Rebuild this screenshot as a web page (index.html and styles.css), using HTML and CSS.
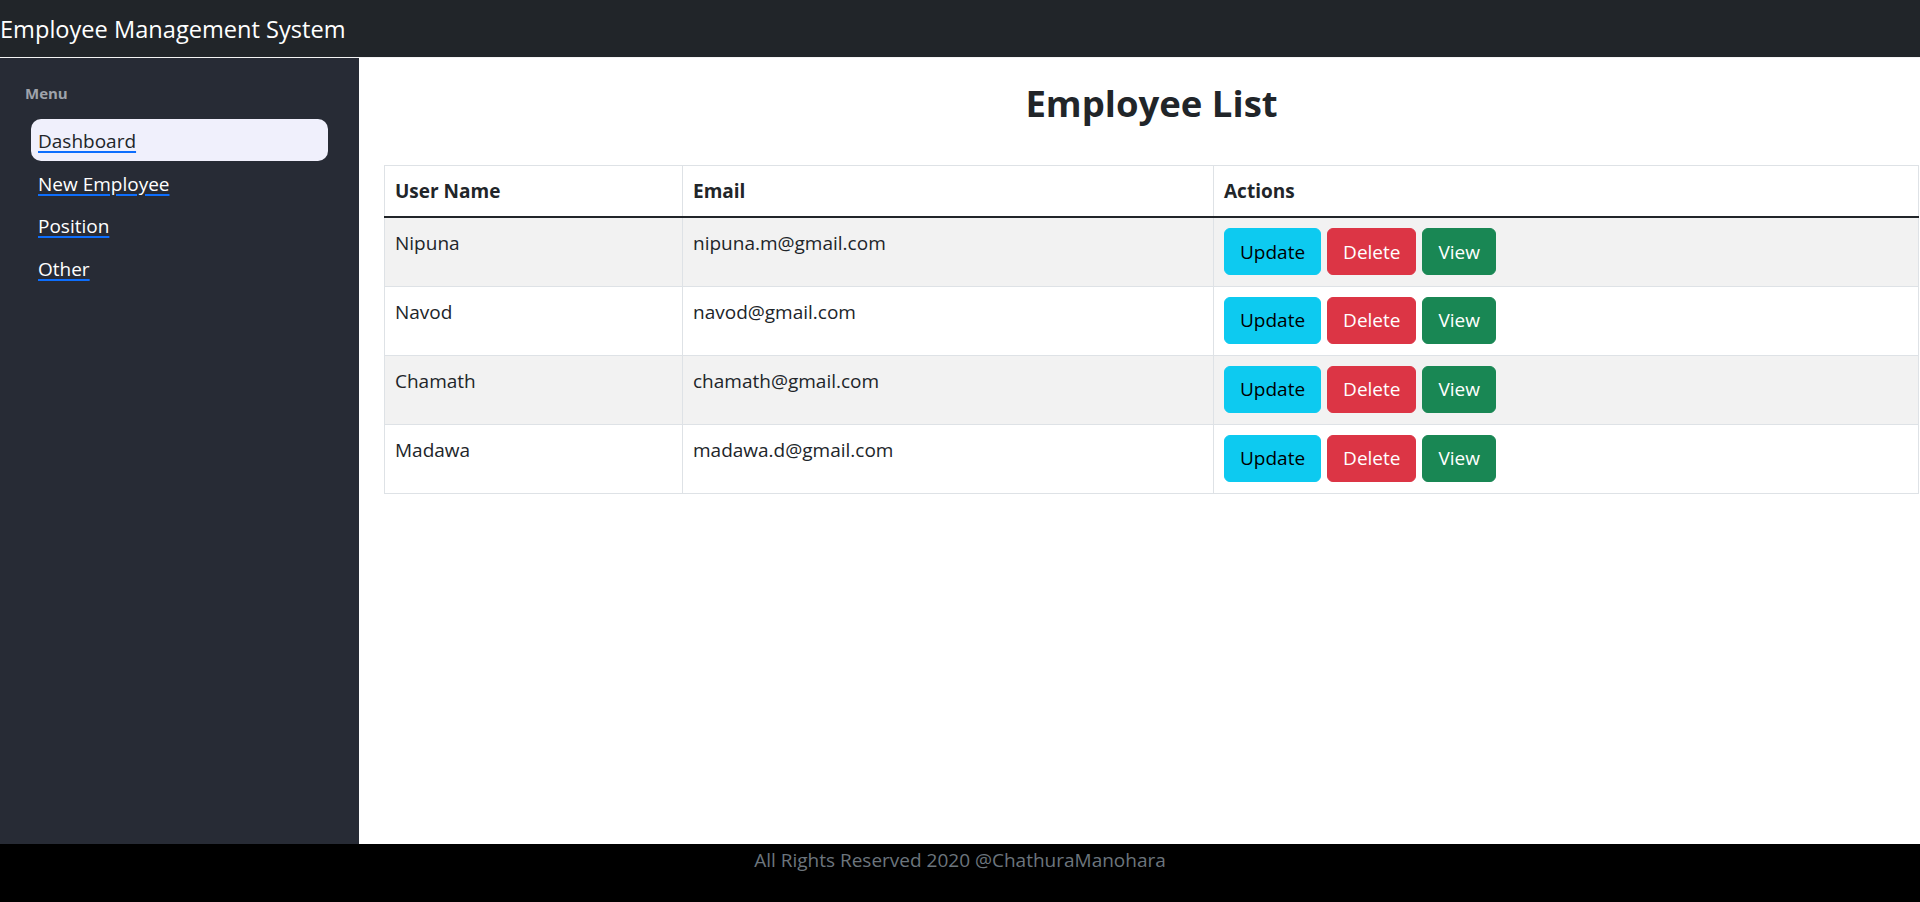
FILE: index.html
```html
<!DOCTYPE html>
<html lang="en">
<head>
<meta charset="utf-8">
<title>Employee Management System</title>
<link rel="stylesheet" href="styles.css">
</head>
<body>
<div class="app">
  <header class="topbar">
    <span class="brand">Employee Management System</span>
  </header>
  <div class="middle">
    <nav class="sidebar">
      <div class="menu-label">Menu</div>
      <ul class="menu">
        <li class="menu-item active"><a href="#">Dashboard</a></li>
        <li class="menu-item"><a href="#">New Employee</a></li>
        <li class="menu-item"><a href="#">Position</a></li>
        <li class="menu-item"><a href="#">Other</a></li>
      </ul>
    </nav>
    <main class="content">
      <h2 class="title">Employee List</h2>
      <table class="emp-table">
        <thead>
          <tr>
            <th class="col-name">User Name</th>
            <th class="col-email">Email</th>
            <th class="col-actions">Actions</th>
          </tr>
        </thead>
        <tbody>
          <tr class="striped">
            <td>Nipuna</td>
            <td>nipuna.m@gmail.com</td>
            <td><div class="actions"><button class="btn btn-info">Update</button><button class="btn btn-danger">Delete</button><button class="btn btn-success">View</button></div></td>
          </tr>
          <tr>
            <td>Navod</td>
            <td>navod@gmail.com</td>
            <td><div class="actions"><button class="btn btn-info">Update</button><button class="btn btn-danger">Delete</button><button class="btn btn-success">View</button></div></td>
          </tr>
          <tr class="striped">
            <td>Chamath</td>
            <td>chamath@gmail.com</td>
            <td><div class="actions"><button class="btn btn-info">Update</button><button class="btn btn-danger">Delete</button><button class="btn btn-success">View</button></div></td>
          </tr>
          <tr>
            <td>Madawa</td>
            <td>madawa.d@gmail.com</td>
            <td><div class="actions"><button class="btn btn-info">Update</button><button class="btn btn-danger">Delete</button><button class="btn btn-success">View</button></div></td>
          </tr>
        </tbody>
      </table>
    </main>
  </div>
  <footer class="footer">All Rights Reserved 2020 @ChathuraManohara</footer>
</div>
</body>
</html>
```

FILE: styles.css
```css
* { box-sizing: border-box; }

html, body {
  margin: 0;
  padding: 0;
  height: 100%;
}

body {
  font-family: "Open Sans", "Noto Sans", sans-serif;
  font-size: 19px;
  color: #212529;
  background: #fff;
}

.app {
  display: grid;
  grid-template-rows: 58px 1fr 58px;
  height: 100vh;
}

.topbar {
  background: #212529;
  border-bottom: 1px solid #f4f4f4;
  display: flex;
  align-items: center;
  padding: 0;
}

.brand {
  color: #fff;
  font-size: 23.6px;
  line-height: 30px;
}

.middle {
  display: flex;
  min-height: 0;
}

.sidebar {
  width: 359px;
  flex: 0 0 359px;
  background: #272b35;
  padding: 25px 31px 0 25px;
}

.menu-label {
  color: #9fa3ab;
  font-size: 15px;
  font-weight: 700;
  line-height: 20px;
}

.menu {
  list-style: none;
  margin: 16px 0 0 6px;
  padding: 0;
}

.menu-item {
  height: 42.5px;
  line-height: 40px;
  padding: 2px 0 0 7px;
  border-radius: 10px;
  font-size: 19px;
}

.menu-item a {
  color: #fff;
  text-decoration: underline;
  text-decoration-color: #0d6efd;
  text-decoration-thickness: 2px;
  text-underline-offset: 3px;
}

.menu-item.active {
  height: 42px;
  margin-bottom: 0.5px;
  background: #f0f0fc;
}

.menu-item.active a {
  color: #212529;
}

.content {
  flex: 1;
  padding: 0 1px 0 25px;
}

.title {
  margin: 21px 0 0 0;
  text-align: center;
  font-size: 36.5px;
  font-weight: 700;
  line-height: 48px;
  height: 86px;
}

.emp-table {
  width: 100%;
  border-collapse: collapse;
  border: 1px solid #dee2e6;
}

.emp-table th,
.emp-table td {
  border: 1px solid #dee2e6;
  padding: 10px;
  text-align: left;
  vertical-align: top;
  line-height: 30px;
}

.emp-table th {
  font-weight: 700;
  border-bottom: 2px solid #212529;
}

.col-name { width: 298px; }
.col-email { width: 531px; }

.emp-table tr.striped td {
  background: #f2f2f2;
}

.emp-table td {
  height: 69px;
}

.actions {
  display: flex;
  gap: 6px;
}

.btn {
  font-family: inherit;
  font-size: 19px;
  line-height: 30px;
  height: 47px;
  padding: 7px 15px;
  border: 1px solid transparent;
  border-radius: 6px;
}

.btn-info {
  background: #0dcaf0;
  border-color: #0dcaf0;
  color: #000;
}

.btn-danger {
  background: #dc3545;
  border-color: #dc3545;
  color: #fff;
}

.btn-success {
  background: #198754;
  border-color: #198754;
  color: #fff;
}

.footer {
  background: #000;
  color: #6c757d;
  font-size: 19px;
  line-height: 30px;
  text-align: center;
  padding-top: 1px;
}
```
